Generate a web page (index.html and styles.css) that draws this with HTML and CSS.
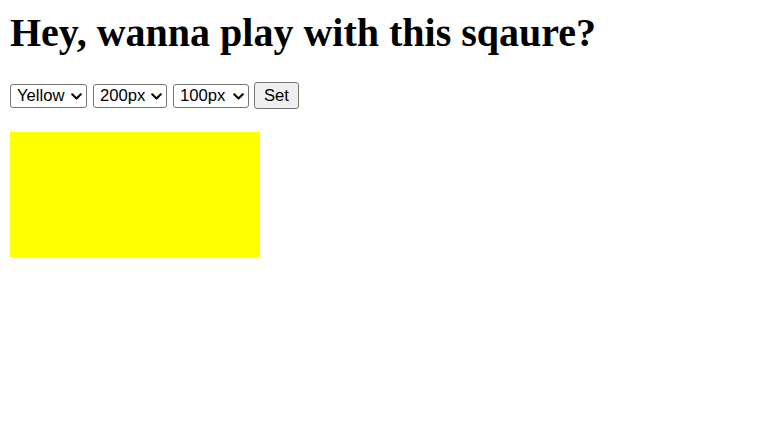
FILE: index.html
```html
<!DOCTYPE html>
<html>
<head>
<meta charset="utf-8">
<link rel="stylesheet" href="styles.css">
</head>
<body>
<h1 class="title">Hey, wanna play with this sqaure?</h1>
<div class="controls">
  <span class="sel-wrap">
    <select class="sel sel-color"><option>Yellow</option><option>Red</option><option>Blue</option></select>
    <svg class="chev" viewBox="0 0 11 7" width="11" height="7"><path d="M1.2 1.2 L5.5 5.5 L9.8 1.2" fill="none" stroke="#000" stroke-width="2" stroke-linecap="round" stroke-linejoin="round"/></svg>
  </span>
  <span class="sel-wrap">
    <select class="sel sel-w"><option>200px</option><option>100px</option><option>300px</option></select>
    <svg class="chev" viewBox="0 0 11 7" width="11" height="7"><path d="M1.2 1.2 L5.5 5.5 L9.8 1.2" fill="none" stroke="#000" stroke-width="2" stroke-linecap="round" stroke-linejoin="round"/></svg>
  </span>
  <span class="sel-wrap">
    <select class="sel sel-h"><option>100px</option><option>200px</option><option>300px</option></select>
    <svg class="chev" viewBox="0 0 11 7" width="11" height="7"><path d="M1.2 1.2 L5.5 5.5 L9.8 1.2" fill="none" stroke="#000" stroke-width="2" stroke-linecap="round" stroke-linejoin="round"/></svg>
  </span>
  <button class="btn">Set</button>
</div>
<div class="square"></div>
</body>
</html>
```
FILE: styles.css
```css
html, body {
  background: #ffffff;
}
body {
  margin: 10px;
  font-family: "Liberation Serif", "Times New Roman", serif;
  color: #000;
}
.title {
  font-family: "Liberation Serif", "Times New Roman", serif;
  font-size: 40px;
  font-weight: bold;
  line-height: 46px;
  margin: 0 0 26px 0;
}
.controls {
  display: flex;
  align-items: center;
  gap: 6px;
  height: 27px;
}
.sel-wrap {
  position: relative;
  display: inline-flex;
}
.sel {
  -webkit-appearance: none;
  appearance: none;
  font-family: "Liberation Sans", Arial, sans-serif;
  font-size: 16.67px;
  height: 24px;
  margin: 0;
  box-sizing: border-box;
  color: #000;
  background: #fff;
  border: 1px solid #767676;
  border-radius: 3px;
  padding: 0 0 0 6px;
  outline: none;
}
.chev {
  position: absolute;
  right: 5px;
  top: 9px;
  pointer-events: none;
}
.sel-color { width: 77px; }
.sel-w { width: 74px; }
.sel-h { width: 76px; }
.btn {
  font-family: "Liberation Sans", Arial, sans-serif;
  font-size: 16.67px;
  height: 27px;
  width: 45px;
  margin: 0 0 0 -1px;
  box-sizing: border-box;
  padding: 0;
  color: #000;
  background: #efefef;
  border: 1px solid #767676;
  border-radius: 3px;
}
.square {
  margin-top: 23px;
  width: 250px;
  height: 125px;
  background: #ffff00;
}
```
